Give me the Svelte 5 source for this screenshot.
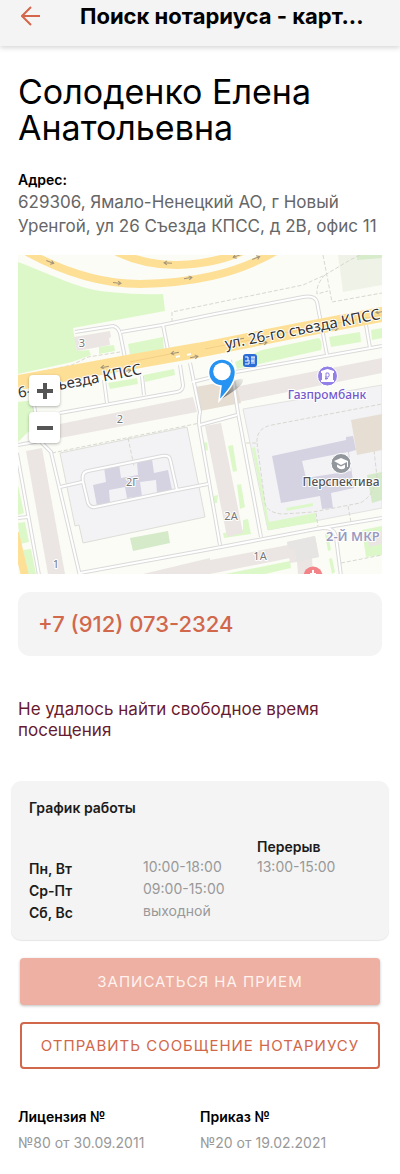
<script lang="ts">
	// Notary card: address, map, phone, schedule and actions

	interface ScheduleRow {
		days: string;
		hours: string;
		lunch: string;
	}

	const schedule: ScheduleRow[] = [
		{ days: 'Пн, Вт', hours: '10:00-18:00', lunch: '13:00-15:00' },
		{ days: 'Ср-Пт', hours: '09:00-15:00', lunch: '' },
		{ days: 'Сб, Вс', hours: 'выходной', lunch: '' }
	];

	const documents = [
		{ title: 'Лицензия №', value: '№80 от 30.09.2011' },
		{ title: 'Приказ №', value: '№20 от 19.02.2021' }
	];

	// Map geometry
	const lawns = [
		'M18 262C55 276 80 290 110 292Q140 295 163 294L165 311 73 328 77 351 89 350 91 355 72 362 18 374Z',
		'M128 344 163 337 164 349 130 355Z',
		'M99 347 114 345 115 351 99 354Z',
		'M108 383 137 378 138 384 110 389Z',
		'M144 375 174 369 175 375 145 382Z',
		'M235 362 262 350 319 338Q323 342 321 350L268 362 237 369Z',
		'M329 337 360 332 361 342 331 347Z',
		'M371 330 382 328V338L372 340Z',
		'M18 402 35 400 30 430 18 442Z',
		'M18 485 24 513 18 515Z',
		'M18 523 25 522 29 542 20 544Z',
		'M23 550 31 549 36 574 27 574Z',
		'M228 446 233 445 237 471 233 472Z',
		'M237 485 241 484 245 507 240 509Z',
		'M203 443 207 442 208 450 204 451Z',
		'M214 496 218 495 217 503 214 503Z',
		'M243 520 248 519 251 534 224 538 223 533 243 530Z',
		'M252 448 255 447 269 522 315 513 317 522 268 530Z',
		'M286 508 313 503V506L287 511Z',
		'M225 574 290 561 291 568 265 574Z',
		'M325 534 328 533 331 550 328 551Z',
		'M329 559 332 558 335 572 332 574Z',
		'M362 530 382 526V555L366 557Z'
	];

	const blocks = [
		'M74 337 110 331 111 337 109 338 110 345 77 351Z',
		'M60 424 193 397 197 412 60 438Z',
		'M235 387 382 358V373L238 402Z',
		'M26 451 42 448 65 574H48Z',
		'M205 426 221 423 243 533 227 537Z',
		'M143 574 210 558V574Z',
		'M200 562 288 545 290 558 210 574H200Z',
		'M287 542 315 536 319 557 312 558 313 574H298L297 562 290 563Z',
		'M367 534 382 531V544L369 547Z'
	];

	const lanes = [
		'M75 332 113 326Q118 327 120 333L125 358',
		'M121 332 162 325 210 315 303 297Q315 295 317 302L327 355',
		'M163 325 168 350',
		'M104 380 107 403',
		'M142 376 144 395',
		'M180 365 183 385Q183 391 177 392L60 413',
		'M190 363 200 412Q198 420 200 430L220 545',
		'M192 382 230 373 382 346',
		'M366 325 370 348',
		'M230 360 238 413 261 537',
		'M200 425 237 415',
		'M17 453 39 575',
		'M18 445 40 441 51 452 80 576',
		'M18 518 28 517',
		'M34 405 40 441',
		'M60 487 82 482',
		'M208 484 177 490 95 507Q90 508 88 503L83 482Q81 472 88 471L162 456Q169 455 170 459L177 490',
		'M80 573 200 551 316 529 382 518',
		'M316 529Q334 525 336 537L341 576'
	];

	const footpaths = [
		'M18 377 72 365 88 357 120 352',
		'M172 322V312L303 285 325 275 350 260 360 255',
		'M323 255 332 302 382 293',
		'M325 275Q316 284 317 294L328 291',
		'M52 453 200 423',
		'M128 438 134 466',
		'M246 443H257Q256 428 272 425L382 404',
		'M257 443 265 503Q267 513 283 514L313 512 360 503Q373 497 377 477L374 450',
		'M316 513 318 526M348 506 351 522',
		'M341 563 382 555'
	];

	// House numbers
	const houses = [
		{ x: 82, y: 347, label: '3' },
		{ x: 120, y: 423, label: '2' },
		{ x: 132, y: 486, label: '2Г' },
		{ x: 56, y: 568, label: '1' },
		{ x: 231, y: 520, label: '2А' },
		{ x: 260, y: 560, label: '1А' }
	];

	// Lane direction marks on the avenue and ramps: x, y, angle
	const arrows = [
		[50, 262, 22],
		[117, 283, 6],
		[188, 278, -10],
		[168, 263, 184],
		[237, 256, 160],
		[256, 258, -22],
		[105, 367, 170],
		[127, 371, -10],
		[175, 353, 170],
		[194, 357, -10],
		[240, 339, 170],
		[263, 343, -10],
		[334, 329, -10],
		[380, 312, 170]
	];
</script>

<header class="topbar">
	<button type="button" class="back" aria-label="Назад">
		<svg viewBox="0 0 20 20" aria-hidden="true">
			<path d="M19 10H2M10 1 1 10l9 9" />
		</svg>
	</button>
	<div class="topbar-title">Поиск нотариуса - карт...</div>
</header>

<main class="page">
	<h1>Солоденко Елена Анатольевна</h1>

	<section class="address">
		<h2>Адрес:</h2>
		<p>629306, Ямало-Ненецкий АО, г Новый Уренгой, ул 26 Съезда КПСС, д 2В, офис 11</p>
	</section>

	<div class="map">
		<svg viewBox="18 255 364 319" role="img" aria-label="Карта">
			<rect x="18" y="255" width="364" height="319" fill="#fbfcf5" />
			<path d="M338 255H382V285L343 292Z" fill="#eff3e7" />
			<path d="M357 255H382V258L357 260Z" fill="#d6eccb" />
			<path d="M60 453 187 427 205 517 83 543 79 525 75 526Z" fill="#f3f3f6" stroke="#deded9" />
			<path d="M243 409 382 385V508L268 530Z" fill="#f3f3f6" stroke="#e2e2e0" />

			{#each lawns as d}
				<path {d} fill="#dcf8c9" />
			{/each}
			<path d="M130 538 168 531 170 543 133 551ZM367 475 382 472V500L372 503Z" fill="#d4eac8" />

			{#each footpaths as d}
				<path {d} class="footpath" />
			{/each}

			{#each blocks as d}
				<path {d} fill="#ebe6e3" />
			{/each}
			<path d="M287 542 315 536 319 557 297 562 295 549 290 550Z" fill="#e6e5e3" />
			<path d="M195 387 235 380 241 403 200 411ZM351 420 382 414V450L357 455Z" fill="#e6ded3" />
			<path
				d="M104 467 119 464 121 478 138 475 137 462 152 459 154 473 168 470 172 490 157 493 156 480 140 482 142 496 127 498 125 487 109 490 110 503 97 506 93 485 106 482Z"
				fill="#d5d2e2"
			/>
			<path
				d="M272 456 346 440V437L353 436 356 450 349 452 354 488 331 493 333 508 322 509 320 496 281 503ZM302 461 306 478 351 471 348 452Z"
				fill="#d5d2e2"
				fill-rule="evenodd"
			/>

			{#each lanes as d}
				<path {d} class="lane-edge" />
			{/each}
			{#each lanes as d}
				<path {d} class="lane" />
			{/each}

			<g class="ramp">
				<path d="M27 252C60 270 100 284 140 284C190 283 235 275 276 251" />
				<path d="M117 252Q145 265 177 265Q215 264 243 251" />
				<path d="M15 533 25 576" />
			</g>
			<path d="M16 383 125 363 200 350 300 330 384 314" class="avenue" />
			<path d="M130 362 170 354M205 349 300 330 382 315" stroke="#f3cf85" fill="none" />
			<path d="M176 357 180 356M187 355 191 354" stroke="#fff" stroke-width="2" />

			{#each arrows as [x, y, angle]}
				<path d="M-4 0H4M1-2 4 0 1 2" class="arrow" transform="translate({x} {y}) rotate({angle})" />
			{/each}

			<g class="street">
				<text transform="translate(226 349) rotate(-11)">ул. 26-го съезда КПСС</text>
				<text transform="translate(19 398) rotate(-11)">6-го съезда КПСС</text>
			</g>

			{#each houses as house}
				<text x={house.x} y={house.y} class="house">{house.label}</text>
			{/each}

			<text x="326" y="541" class="district">2-Й МКР</text>

			<!-- Bus stop -->
			<rect x="243" y="354" width="14" height="13" rx="3" fill="#2c6cd6" />
			<path
				d="M245 357H248V361H245M245 364H249V360M251 357H255M252 357V364M254 357V364M251 361H254"
				stroke="#fff"
				fill="none"
			/>

			<!-- Bank -->
			<circle cx="327.500" cy="376" r="10" fill="#9280e6" stroke="#fff" />
			<path d="M321 373V371L327.500 369 334 371V373H333V380H334V382H321V380H322V373Z" fill="#fff" />
			<path d="M326 380V373H328.500Q330 375 328.500 377H325M325 378.500H328" class="rouble" />
			<text x="327" y="399" class="place bank">Газпромбанк</text>

			<!-- School -->
			<circle cx="341" cy="463.500" r="10" fill="#92969d" stroke="#fff" />
			<path
				d="M334 461 341 458 348 461V467H347V462L341 465ZM337 464.500 341 466.500 345 464.500V468Q341 471 337 467Z"
				fill="#fff"
			/>
			<text x="341" y="486" class="place">Перспектива</text>

			<!-- Clinic -->
			<circle cx="313" cy="576" r="9.500" fill="#f28488" />
			<path d="M313 570V574M310 574H316" stroke="#fff" stroke-width="2" />

			<!-- Marker -->
			<path d="M221 399 232 382Q244 376 243 381Q242 387 221 399Z" fill="url(#marker-shadow)" />
			<path
				d="M219 401 221 386A13.500 13.500 0 1 1 235.500 372C235.500 382 229 390 219 401Z"
				fill="#2693f2"
				stroke="#fff"
				stroke-width="1.500"
			/>
			<circle cx="222" cy="371.500" r="8.800" fill="#fff" />
			<defs>
				<linearGradient id="marker-shadow" x1="0" y1="1" x2="1" y2="0">
					<stop offset="0" stop-color="#333" stop-opacity="0.8" />
					<stop offset="1" stop-color="#777" stop-opacity="0.1" />
				</linearGradient>
			</defs>
		</svg>

		<div class="zoom">
			<button type="button" aria-label="Приблизить">
				<svg viewBox="0 0 16 16" aria-hidden="true"><path d="M0 8H16M8 0V16" /></svg>
			</button>
			<button type="button" aria-label="Отдалить">
				<svg viewBox="0 0 16 16" aria-hidden="true"><path d="M0 8H16" /></svg>
			</button>
		</div>
	</div>

	<a class="phone" href="tel:+79120732324">+7 (912) 073-2324</a>

	<p class="warning">Не удалось найти свободное время посещения</p>

	<section class="schedule">
		<h2>График работы</h2>
		<table>
			<thead>
				<tr>
					<td></td>
					<td></td>
					<th scope="col">Перерыв</th>
				</tr>
			</thead>
			<tbody>
				{#each schedule as row (row.days)}
					<tr>
						<th scope="row">{row.days}</th>
						<td>{row.hours}</td>
						<td>{row.lunch}</td>
					</tr>
				{/each}
			</tbody>
		</table>
	</section>

	<div class="actions">
		<button type="button" class="btn primary" disabled>Записаться на прием</button>
		<button type="button" class="btn outline">Отправить сообщение нотариусу</button>
	</div>

	<dl class="documents">
		{#each documents as doc (doc.title)}
			<div>
				<dt>{doc.title}</dt>
				<dd>{doc.value}</dd>
			</div>
		{/each}
	</dl>
</main>

<style>
	:global(body) {
		margin: 0;
		background: #fff;
		color: #000;
		font-family: Inter, 'Noto Sans', sans-serif;
	}

	h1,
	h2,
	p,
	dl,
	dd {
		margin: 0;
	}

	button {
		font-family: inherit;
		cursor: pointer;
	}

	.topbar {
		display: flex;
		align-items: center;
		height: 32px;
		padding: 0 18px 14px;
		background: #f4f4f4;
		box-shadow: 0 2px 5px rgba(0, 0, 0, 0.16);
	}

	.back {
		display: flex;
		width: 62px;
		padding: 0 3px;
		border: 0;
		background: none;
	}

	.back svg {
		width: 20px;
		height: 20px;
		fill: none;
		stroke: #d5664b;
		stroke-width: 2;
	}

	.topbar-title {
		font-size: 22px;
		line-height: 32px;
		font-weight: 700;
		white-space: nowrap;
	}

	.page {
		padding: 28px 18px 18px;
	}

	h1 {
		font-size: 34px;
		line-height: 36px;
		font-weight: 400;
	}

	.address {
		margin-top: 24px;
	}

	.address h2 {
		font-size: 14px;
		line-height: 20px;
		font-weight: 600;
	}

	.address p {
		color: #666;
		font-size: 17px;
		line-height: 24px;
	}

	.map {
		position: relative;
		margin-top: 17px;
	}

	.map > svg {
		display: block;
		width: 100%;
		font-family: 'Noto Sans', sans-serif;
	}

	.lane-edge,
	.lane,
	.ramp path,
	.avenue,
	.footpath,
	.arrow,
	.rouble {
		fill: none;
	}

	.lane-edge {
		stroke: #dadada;
		stroke-width: 4;
	}

	.lane {
		stroke: #fff;
		stroke-width: 2;
	}

	.ramp path {
		stroke: #fedf96;
		stroke-width: 8;
	}

	.avenue {
		stroke: #fedf96;
		stroke-width: 15;
	}

	.footpath {
		stroke: #d8d8d0;
		stroke-dasharray: 4 2;
	}

	.arrow {
		stroke: #a1947a;
	}

	.rouble {
		stroke: #9280e6;
	}

	/* White halo under every map caption */
	.map text {
		stroke: #fff;
		stroke-width: 2;
		stroke-linejoin: round;
		paint-order: stroke;
	}

	.street {
		fill: #333;
		font-size: 15px;
	}

	.map .house {
		fill: #777;
		font-size: 11px;
		text-anchor: middle;
	}

	.district {
		fill: #9a9abf;
		font-size: 13px;
		font-weight: 600;
	}

	.place {
		fill: #555;
		font-size: 12px;
		font-weight: 500;
		text-anchor: middle;
	}

	.bank {
		fill: #7459cd;
	}

	.zoom {
		position: absolute;
		top: 120px;
		left: 11px;
		display: grid;
		gap: 6px;
	}

	.zoom button {
		display: grid;
		place-items: center;
		width: 31px;
		height: 31px;
		padding: 0;
		border: 0;
		border-radius: 4px;
		background: #fff;
		box-shadow: 0 1px 3px rgba(0, 0, 0, 0.3);
	}

	.zoom svg {
		width: 16px;
		height: 16px;
		stroke: #555;
		stroke-width: 4;
	}

	.phone {
		display: block;
		margin-top: 18px;
		padding: 0 20px;
		border-radius: 12px;
		background: #f4f4f4;
		color: #d1674b;
		font-size: 22px;
		line-height: 64px;
		font-weight: 500;
		text-decoration: none;
	}

	.warning {
		margin-top: 43px;
		color: #681a30;
		font-size: 17px;
		line-height: 21px;
	}

	.schedule {
		margin: 40px -7px 0;
		padding: 16px 18px 17px;
		border-radius: 10px;
		background: #f4f4f4;
		box-shadow: 0 1px 1px rgba(0, 0, 0, 0.1);
		color: #1b1b1b;
	}

	.schedule h2 {
		margin-bottom: 18px;
		font-size: 14px;
		line-height: 22px;
		font-weight: 600;
	}

	table {
		width: 100%;
		table-layout: fixed;
		border-collapse: collapse;
	}

	th,
	td {
		height: 20px;
		padding: 0;
		font-size: 14px;
		line-height: 20px;
		text-align: left;
		vertical-align: top;
	}

	th {
		font-weight: 600;
	}

	tbody th {
		padding-top: 2px;
	}

	td {
		color: #999;
	}

	.actions {
		display: grid;
		gap: 17px;
		margin: 18px 2px 0;
	}

	.btn {
		height: 47px;
		padding: 0;
		border-radius: 4px;
		font-size: 15px;
		letter-spacing: 1px;
		text-transform: uppercase;
		white-space: nowrap;
	}

	.primary {
		border: 0;
		background: #edb0a2;
		box-shadow: 0 1px 3px rgba(0, 0, 0, 0.25);
		color: #fff3ef;
	}

	.outline {
		border: 2px solid #d1674b;
		background: #fff;
		color: #d1674b;
	}

	.documents {
		display: grid;
		grid-template-columns: 1fr 1fr;
		margin-top: 35px;
		font-size: 14px;
		line-height: 26px;
	}

	dt {
		font-weight: 600;
	}

	dd {
		color: #999;
	}
</style>
